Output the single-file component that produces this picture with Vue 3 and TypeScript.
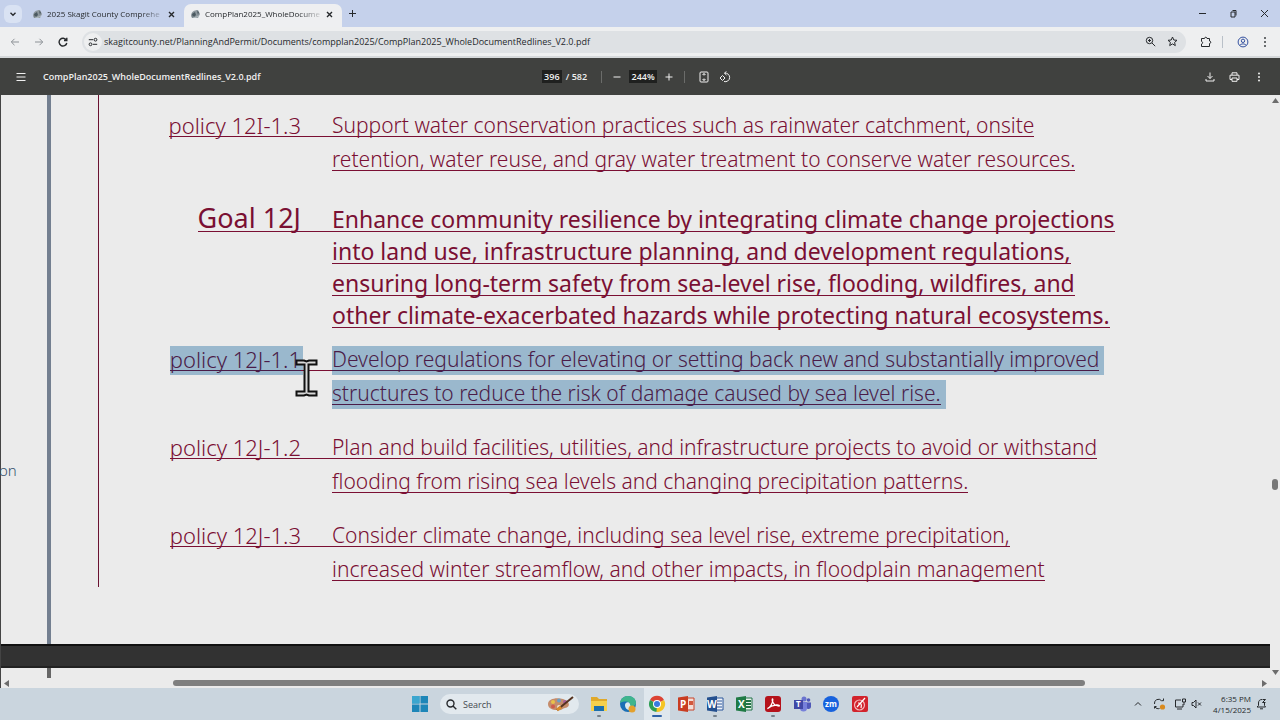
<script setup lang="ts">
import { ref } from 'vue'

interface Entry {
  kind: 'policy' | 'goal'
  label: string
  lines: string[]
  selected?: boolean
}

const tabs = [
  { title: '2025 Skagit County Comprehe', active: false },
  { title: 'CompPlan2025_WholeDocume', active: true }
]

const address = ref('skagitcounty.net/PlanningAndPermit/Documents/compplan2025/CompPlan2025_WholeDocumentRedlines_V2.0.pdf')
const page = ref('396')
const zoom = ref('244%')
const query = ref('')

const entries: Entry[] = [
  {
    kind: 'policy',
    label: 'policy 12I-1.3',
    lines: [
      'Support water conservation practices such as rainwater catchment, onsite',
      'retention, water reuse, and gray water treatment to conserve water resources.'
    ]
  },
  {
    kind: 'goal',
    label: 'Goal 12J',
    lines: [
      'Enhance community resilience by integrating climate change projections',
      'into land use, infrastructure planning, and development regulations,',
      'ensuring long-term safety from sea-level rise, flooding, wildfires, and',
      'other climate-exacerbated hazards while protecting natural ecosystems.'
    ]
  },
  {
    kind: 'policy',
    label: 'policy 12J-1.1',
    selected: true,
    lines: [
      'Develop regulations for elevating or setting back new and substantially improved',
      'structures to reduce the risk of damage caused by sea level rise.'
    ]
  },
  {
    kind: 'policy',
    label: 'policy 12J-1.2',
    lines: [
      'Plan and build facilities, utilities, and infrastructure projects to avoid or withstand',
      'flooding from rising sea levels and changing precipitation patterns.'
    ]
  },
  {
    kind: 'policy',
    label: 'policy 12J-1.3',
    lines: [
      'Consider climate change, including sea level rise, extreme precipitation,',
      'increased winter streamflow, and other impacts, in floodplain management'
    ]
  }
]
</script>

<template>
  <div class="screen">
    <header class="tabstrip">
      <button class="tab-search" aria-label="Search tabs">
        <svg width="8" height="8" viewBox="0 0 8 8"><path d="M1.5 2.8 4 5.2 6.5 2.8" class="ink bold" /></svg>
      </button>
      <div v-for="t in tabs" :key="t.title" class="tab" :class="{ active: t.active }">
        <svg width="11" height="11" viewBox="0 0 11 11">
          <path d="M1 7C1 3 4 1 8 1l2 4-2 4H2z" fill="#8d979d" />
          <path d="M2 5 5 3l1 3-3 3zM7 2l2 1-1 3z" fill="#4b5960" />
          <path d="M3 8c2 1 4 0 6-1" stroke="#b9c4c8" fill="none" />
        </svg>
        <a href="#" class="tab-title">{{ t.title }}</a>
        <button aria-label="Close tab">
          <svg width="7" height="7" viewBox="0 0 7 7"><path d="m1 1 5 5M6 1 1 6" class="ink bold" /></svg>
        </button>
      </div>
      <button class="new-tab" aria-label="New tab">
        <svg width="9" height="9" viewBox="0 0 9 9"><path d="M4.5 1v7M1 4.5h7" class="ink" /></svg>
      </button>
      <div class="window-buttons">
        <button aria-label="Minimize"><svg width="9" height="9" viewBox="0 0 9 9"><path d="M1 4.5h7" class="ink" /></svg></button>
        <button aria-label="Restore">
          <svg width="9" height="9" viewBox="0 0 9 9"><path d="M2 3h4v5H2zM3.500 1.500h3.500v5" class="ink" /></svg>
        </button>
        <button aria-label="Close"><svg width="9" height="9" viewBox="0 0 9 9"><path d="m1 1 7 7M8 1 1 8" class="ink" /></svg></button>
      </div>
    </header>

    <nav class="toolbar">
      <button class="dim" aria-label="Back"><svg width="10" height="10" viewBox="0 0 10 10"><path d="M9 5H1.500M4.500 1.800 1.300 5l3.200 3.200" class="ink" /></svg></button>
      <button class="dim" aria-label="Forward"><svg width="10" height="10" viewBox="0 0 10 10"><path d="M1 5h7.500M5.500 1.800 8.700 5 5.500 8.200" class="ink" /></svg></button>
      <button aria-label="Reload">
        <svg width="10" height="10" viewBox="0 0 10 10"><path d="M8.300 3A3.900 3.900 0 1 0 8.800 6M8.800.8v2.700H6" class="ink bold" /></svg>
      </button>
      <div class="omnibox">
        <button class="site-info" aria-label="Site information">
          <svg width="10" height="10" viewBox="0 0 10 10"><path d="M.8 2.700h4.400M4.800 7.300h4.400" class="ink" /><circle cx="7.500" cy="2.700" r="1.400" class="ink" /><circle cx="2.500" cy="7.300" r="1.400" class="ink" /></svg>
        </button>
        <input v-model="address" type="text" aria-label="Address" />
        <button aria-label="Zoom">
          <svg width="11" height="11" viewBox="0 0 11 11"><circle cx="4.500" cy="4.500" r="3.200" class="ink" /><path d="M7 7l3.200 3.200M4.500 3v3M3 4.500h3" class="ink" /></svg>
        </button>
        <button aria-label="Bookmark">
          <svg width="11" height="11" viewBox="0 0 11 11"><path d="m5.500 1 1.300 3 3.200.3-2.400 2.100.7 3.200-2.800-1.700-2.800 1.700.7-3.200L1 4.300 4.200 4z" class="ink" /></svg>
        </button>
      </div>
      <button class="extensions" aria-label="Extensions">
        <svg width="12" height="12" viewBox="0 0 12 12"><path d="M1.500 2.500H4.500C4.500.8 7 .8 7 2.500h2.500V5c1.700 0 1.700 2.500 0 2.500v3h-8V8c1.500-.3 1.500-2.300 0-2.600z" class="ink" /></svg>
      </button>
      <span class="divider"></span>
      <button class="profile" aria-label="Profile">
        <svg width="12" height="12" viewBox="0 0 12 12"><circle cx="6" cy="6" r="4.900" class="ink" /><circle cx="6" cy="4.800" r="1.700" class="ink" /><path d="M2.700 9.400c1.500-2 5-2 6.600 0" class="ink" /></svg>
      </button>
      <button aria-label="Menu">
        <svg width="4" height="12" viewBox="0 0 4 12" fill="#3c4043"><circle cx="2" cy="2" r="1" /><circle cx="2" cy="6" r="1" /><circle cx="2" cy="10" r="1" /></svg>
      </button>
    </nav>

    <section class="pdfbar">
      <div class="pdf-left">
        <button aria-label="Sidebar"><svg width="10" height="10" viewBox="0 0 10 10"><path d="M.5 1.500h9M.5 5h9M.5 8.500h9" class="ink" /></svg></button>
        <span class="pdf-name">CompPlan2025_WholeDocumentRedlines_V2.0.pdf</span>
      </div>
      <div class="pdf-center">
        <input v-model="page" class="page-field" type="text" aria-label="Page" />
        <span class="page-total">/ 582</span>
        <span class="divider"></span>
        <button aria-label="Zoom out"><svg width="8" height="8" viewBox="0 0 8 8"><path d="M.5 4h7" class="ink" /></svg></button>
        <input v-model="zoom" class="zoom-field" type="text" aria-label="Zoom level" />
        <button aria-label="Zoom in"><svg width="8" height="8" viewBox="0 0 8 8"><path d="M.5 4h7M4 .5v7" class="ink" /></svg></button>
        <span class="divider"></span>
        <button class="fit" aria-label="Fit to page">
          <svg width="10" height="12" viewBox="0 0 10 12"><rect x="1" y="1" width="8" height="10" rx="1" class="ink" /><path d="M5 2.500v2M5 7.500v2M3.500 4 5 2.500 6.500 4M3.500 8 5 9.500 6.500 8" class="ink" /></svg>
        </button>
        <button aria-label="Rotate">
          <svg width="12" height="12" viewBox="0 0 12 12"><path d="M5.500 2.200A4.300 4.300 0 1 1 5 10.500M7.500.3 5.500 2.200l2 1.900M3.500 4.500 6 7 3.500 9.500 1 7z" class="ink" /></svg>
        </button>
      </div>
      <div class="pdf-right">
        <button aria-label="Download"><svg width="10" height="10" viewBox="0 0 10 10"><path d="M5 .5v6M2.500 4 5 6.500 7.500 4M1 7v2h8V7" class="ink" /></svg></button>
        <button aria-label="Print">
          <svg width="11" height="10" viewBox="0 0 11 10"><path d="M3 3V.8h5V3M3 7.500H1V3.200h9v4.300H8M3 6h5v3.300H3z" class="ink" /></svg>
        </button>
        <button class="more" aria-label="More"><svg width="4" height="10" viewBox="0 0 4 10" fill="#eee"><circle cx="2" cy="1.500" r="1" /><circle cx="2" cy="5" r="1" /><circle cx="2" cy="8.500" r="1" /></svg></button>
      </div>
    </section>

    <main class="viewer">
      <div class="pages">
        <div class="sheet">
          <aside class="comments">on</aside>
          <article class="redline">
            <section v-for="e in entries" :key="e.label" :class="['entry', e.kind, { selected: e.selected }]">
              <h2 class="label"><span class="run">{{ e.label }}</span></h2>
              <span class="leader"></span>
              <p class="body">
                <span v-for="l in e.lines" :key="l" class="line"><span class="run">{{ l }}</span></span>
              </p>
            </section>
          </article>
        </div>
        <div class="page-gap"></div>
        <div class="next-sheet"><span class="rule"></span></div>
        <div class="hscroll">
          <svg width="5" height="7" viewBox="0 0 5 7"><path d="M5 0v7L0 3.500z" fill="#6c6c6c" /></svg>
          <div class="htrack"><div class="hthumb"></div></div>
          <svg width="5" height="7" viewBox="0 0 5 7"><path d="M0 0v7l5-3.500z" fill="#6c6c6c" /></svg>
        </div>
      </div>
      <div class="vscroll">
        <svg width="7" height="5" viewBox="0 0 7 5"><path d="M0 5h7L3.500 0z" fill="#6c6c6c" /></svg>
        <div class="vtrack"><div class="vthumb"></div></div>
        <svg width="7" height="5" viewBox="0 0 7 5"><path d="M0 0h7L3.500 5z" fill="#6c6c6c" /></svg>
      </div>
      <svg class="cursor" width="23" height="38" viewBox="0 0 23 38">
        <path d="M1.500 1.500H9l2.500 1 2.500-1h7.500v4h-8v27h8v4H14l-2.500-1-2.500 1H1.500v-4h8v-27h-8z" fill="#d8d8d8" stroke="#111" stroke-width="2" />
      </svg>
    </main>

    <footer class="taskbar">
      <div class="apps">
        <button aria-label="Start">
          <svg width="18" height="18" viewBox="0 0 18 18"><path d="M1 1h7.500v7.500H1zM9.500 1H17v7.500H9.500zM1 9.500h7.500V17H1zM9.500 9.500H17V17H9.500z" fill="#1d86b8" /><path d="M1 1h7.500v7.500H1z" fill="#3ba6cf" /></svg>
        </button>
        <label class="search">
          <svg width="11" height="11" viewBox="0 0 11 11"><circle cx="4.500" cy="4.500" r="3.500" class="ink bold" /><path d="m7 7 3.300 3.300" class="ink bold" /></svg>
          <input v-model="query" type="text" placeholder="Search" aria-label="Search" />
          <svg width="28" height="16" viewBox="0 0 28 16">
            <path d="M1 8c0-5 8-7 15-5 7 2 8 8 2 9-3 .5-3 3-8 2C5 14 1 12 1 8z" fill="#c58c6b" />
            <circle cx="6" cy="6" r="2" fill="#e9c24a" /><circle cx="12" cy="4.500" r="2" fill="#6a9fc4" /><circle cx="18" cy="6" r="2" fill="#a75f9b" /><circle cx="6" cy="10.500" r="2" fill="#cf5b4b" /><circle cx="12" cy="11" r="2" fill="#f0e2d2" />
            <path d="M10 14 26 1" stroke="#55321f" stroke-width="2" /><path d="m10 14 4-3" stroke="#d98b2b" stroke-width="3" />
          </svg>
        </label>
        <button class="running" aria-label="File Explorer">
          <svg width="18" height="18" viewBox="0 0 18 18"><path d="M1 2h6l2 2h8v12H1z" fill="#e0a92a" /><path d="M1 6h16v10H1z" fill="#f5d04d" /><path d="M4 11h10v5H4z" fill="#1c6fae" /></svg>
        </button>
        <button aria-label="Edge">
          <svg width="18" height="18" viewBox="0 0 18 18"><circle cx="9" cy="9" r="8" fill="#1b6fb5" /><path d="M1 8C2 3 5 1 9 1c5 0 8 3 8 7 0 3-4 4-6 3 1-4-4-6-10-3z" fill="#3fb58d" /><path d="M6 10c0-3 4-4 5-1 0 2 1 3 5 3-1 2-3 3-5 3-3 0-5-2-5-5z" fill="#dbe9ee" /><circle cx="13" cy="14" r="3.500" fill="#e3a02c" /></svg>
        </button>
        <button class="running current" aria-label="Chrome">
          <svg width="18" height="18" viewBox="0 0 18 18"><path d="M9 9 2 5a8 8 0 0 1 14 0z" fill="#dc4435" /><path d="M9 9 2 5a8 8 0 0 0 6.500 12L13 9z" fill="#2f9e54" /><path d="M9 9l7-4a8 8 0 0 1-7.500 12z" fill="#f5c526" /><circle cx="9" cy="9" r="4" fill="#fff" /><circle cx="9" cy="9" r="3" fill="#3a7be0" /></svg>
        </button>
        <button aria-label="PowerPoint">
          <svg width="18" height="18" viewBox="0 0 18 18"><path d="M9 3h8v12H9z" fill="#f3ddd7" stroke="#c8452b" /><path d="M12 6h4v4h-4z" fill="#d2573c" /><path d="M1 2.500 11 1v16L1 15.500z" fill="#c93d22" /><text x="3" y="13" class="glyph">P</text></svg>
        </button>
        <button class="running" aria-label="Word">
          <svg width="18" height="18" viewBox="0 0 18 18"><path d="M9 3h8v12H9z" fill="#eef2f9" stroke="#2b579a" /><path d="M11 6h5M11 9h5M11 12h5" stroke="#2b579a" /><path d="M1 2.500 11 1v16L1 15.500z" fill="#24508f" /><text x="1" y="13" class="glyph">W</text></svg>
        </button>
        <button aria-label="Excel">
          <svg width="18" height="18" viewBox="0 0 18 18"><path d="M9 3h8v12H9z" fill="#e9f3ec" stroke="#217346" /><path d="M11 6h5M11 9h5M11 12h5" stroke="#217346" stroke-width="2" /><path d="M1 2.500 11 1v16L1 15.500z" fill="#1f7a45" /><text x="3" y="13" class="glyph">X</text></svg>
        </button>
        <button class="running" aria-label="Acrobat">
          <svg width="18" height="18" viewBox="0 0 18 18"><rect x="1" y="1" width="16" height="16" rx="3" fill="#b5121b" /><path d="M3.500 13.500C6 13 9 8 8.800 4.500 8.500 3 7.500 5 9 7.500s4 3.500 6 3.500c1 0 0-1.500-3-1-3 .3-6 1.500-8.500 3.500z" fill="none" stroke="#fff" stroke-width="1.300" /></svg>
        </button>
        <button aria-label="Teams">
          <svg width="18" height="18" viewBox="0 0 18 18"><circle cx="11" cy="4" r="2.500" fill="#6a73cf" /><circle cx="15.500" cy="5" r="1.800" fill="#5059b8" /><path d="M7 7h7v6a3.500 3.500 0 0 1-7 0z" fill="#7680da" /><path d="M14 7.500h4V12a2.500 2.500 0 0 1-4 1.500z" fill="#5059b8" /><path d="M1 5h9v9H1z" fill="#4048a5" /><text x="3" y="12" class="glyph small">T</text></svg>
        </button>
        <button aria-label="Zoom app">
          <svg width="18" height="18" viewBox="0 0 18 18"><circle cx="9" cy="9" r="8" fill="#1762dd" /><text x="9" y="12" text-anchor="middle" class="glyph small">zm</text></svg>
        </button>
        <button aria-label="PDF editor">
          <svg width="18" height="18" viewBox="0 0 18 18"><rect x="1" y="1" width="16" height="16" rx="2" fill="#d2232c" /><circle cx="8.500" cy="10" r="5" fill="none" stroke="#f4b9bb" stroke-width="1.200" /><path d="m6 12 8-9M7 8c3 0 4 1 3 5" stroke="#fff" stroke-width="1.200" fill="none" /></svg>
        </button>
      </div>
      <div class="tray">
        <button aria-label="Hidden icons"><svg width="8" height="8" viewBox="0 0 8 8"><path d="M1 5.500 4 2.500l3 3" class="ink" /></svg></button>
        <button aria-label="Updates">
          <svg width="13" height="12" viewBox="0 0 13 12"><path d="M1.500 6a4 4 0 0 1 7-3.300h2M10.500.5v2.200M1.500 10.500V8.500h2M2 9c1 1.500 3 2 4.500 1.500" class="ink" /><circle cx="9.500" cy="9" r="2.600" fill="#d98a1e" /></svg>
        </button>
        <button class="network" aria-label="Network and volume">
          <svg width="28" height="12" viewBox="0 0 28 12"><path d="M7 2H1.500v7H9V6M3 11h5M8.500 1h3v3h-3zM10 4v3" class="ink" /><path d="M18 4.500h1.500L22 2v8l-2.500-2.500H18zM24 4.500l3 3M27 4.500l-3 3" class="ink" /></svg>
        </button>
        <time class="clock"><span>6:35 PM</span><span>4/15/2025</span></time>
        <button aria-label="Notifications">
          <svg width="11" height="12" viewBox="0 0 11 12"><path d="M1 9h8.500L8.500 7.500V5M6 1.500C3.500 1.500 2.500 3 2.500 5v2.500L1 9M4 10.800h3M6.500 1.500h3l-3 3h3" class="ink" /></svg>
        </button>
      </div>
    </footer>
  </div>
</template>

<style>
html, body { margin: 0; background: #ebebeb; }
</style>

<style scoped>
.screen {
  --paper: #ebebeb;
  --redline: #7a0f33;
  --mark: #9ab8cd;
  display: flex;
  flex-direction: column;
  min-height: 100vh;
  font-family: "Open Sans", "Noto Sans", sans-serif;
  font-size: 9px;
  color: #26292c;
}
.screen *, .screen { box-sizing: border-box; }
button { display: flex; align-items: center; justify-content: center; padding: 0; border: 0; background: none; color: inherit; }
input { min-width: 0; padding: 0; border: 0; outline: 0; background: none; color: inherit; font: inherit; }
svg { display: block; flex: none; }
.ink { fill: none; stroke: currentColor; stroke-width: 1; }
.bold { stroke-width: 1.4; }
.divider { width: 1px; height: 12px; background: #b9c0c8; }

.tabstrip { display: flex; align-items: flex-end; height: 27px; padding-left: 4px; background: #c5d1eb; }
.tab-search { width: 18px; height: 18px; margin: 0 4px 4px 0; border-radius: 6px; background: #d9e2f3; }
.tab { display: flex; align-items: center; gap: 4px; width: 158px; height: 23px; padding: 0 9px 3px 6px; border-radius: 7px 7px 0 0; }
.tab.active { background: #eeeff1; }
.tab-title { flex: 1; color: inherit; font-size: 8px; line-height: 14px; text-decoration: none; white-space: nowrap; mask-image: linear-gradient(90deg, #000 80%, transparent 102%); }
.new-tab { width: 20px; height: 27px; }
.window-buttons { display: flex; gap: 22px; height: 27px; margin-left: auto; padding-right: 11px; }

.toolbar { display: flex; align-items: center; gap: 14px; height: 31px; padding: 0 13px 0 10px; border-bottom: 2px solid #d5d8da; background: #eeeff0; }
.dim { color: #8c9196; }
.omnibox { display: flex; flex: 1; align-items: center; gap: 11px; height: 22px; padding: 0 8px 0 2px; border-radius: 11px; background: #dee1e4; }
.omnibox input { flex: 1; }
.site-info { width: 18px; height: 18px; margin-right: -9px; border-radius: 9px; background: #eeeff0; }
.extensions { margin-right: -4px; }
.profile { color: #3350a0; }

.pdfbar { display: grid; grid-template-columns: 1fr auto 1fr; align-items: center; height: 37px; background: #40413f; color: #f0f0f0; }
.pdf-left { display: flex; align-items: center; gap: 17px; padding-left: 16px; }
.pdf-name { font-weight: 600; }
.pdf-center { display: flex; align-items: center; gap: 11px; padding-right: 7px; font-weight: 600; }
.pdf-center input { height: 13px; background: #1f201f; text-align: center; }
.pdf-center .divider { background: #6b6c6a; }
.page-field { width: 20px; }
.page-total { margin: 0 3px 0 -7px; }
.zoom-field { width: 28px; margin: 0 -3px; }
.fit { margin: 0 -1px 0 3px; }
.pdf-right { display: flex; align-items: center; justify-content: flex-end; gap: 14px; padding-right: 19px; }
.more { margin-left: 3px; }

.viewer { position: relative; display: flex; flex: 1; background: var(--paper); }
.pages { display: flex; flex: 1; flex-direction: column; min-width: 0; border-left: 1px solid #444; }
.sheet { display: flex; flex: 1; padding-bottom: 57px; background: linear-gradient(90deg, transparent 46px, #737f90 46px, #737f90 50px, transparent 50px); }
.comments { display: flex; align-items: center; width: 97px; padding-top: 258px; color: #35506b; font-family: "Noto Sans", sans-serif; font-size: 15px; font-weight: 300; text-indent: -2px; }
.redline { flex: 1; padding: 8px 0 6px; border-left: 1px solid #6a1231; color: var(--redline); font-family: "Noto Sans", sans-serif; }
.entry { display: grid; grid-template-columns: 202px 31px 1fr; margin-top: 20px; }
.entry:first-child { margin-top: 0; }
.goal { margin-top: 29px; }
.goal + .policy { margin-top: 9px; }
.label, .body { margin: 0; font-size: 21px; font-weight: 300; line-height: 21px; white-space: nowrap; }
.label, .line { display: flex; align-items: flex-end; height: 34px; }
.label { justify-content: flex-end; font-size: 22px; }
.run { padding-top: 3px; border-bottom: 1px solid var(--redline); }
.leader { height: 34px; border-bottom: 1px solid var(--redline); }
.goal .body { font-size: 23px; font-weight: 400; line-height: 23px; }
.goal .label { font-size: 27px; font-weight: 400; line-height: 26px; }
.goal .label, .goal .line, .goal .leader { height: 32px; }
.selected .run { background: var(--mark); color: #4a1c48; border-color: #4a1c48; box-shadow: 0 4px var(--mark), 2px 0 var(--mark), 2px 4px var(--mark); }
.selected .line .run { box-shadow: 0 4px var(--mark), 5px 0 var(--mark), 5px 4px var(--mark); }

.page-gap { height: 24px; border-top: 2px solid #111; border-bottom: 2px solid #222; background: #323232; }
.next-sheet { display: flex; height: 10px; padding-left: 46px; }
.rule { width: 4px; background: #666; }
.hscroll { display: flex; align-items: center; gap: 2px; height: 10px; padding: 0 3px; }
.htrack { flex: 1; }
.hthumb { width: 73%; height: 6px; margin-left: 13%; border-radius: 3px; background: #7f7f7f; }
.vscroll { display: flex; flex-direction: column; align-items: center; width: 10px; padding: 3px 0 13px; }
.vtrack { flex: 1; padding-top: 376px; }
.vthumb { width: 6px; height: 11px; border-radius: 3px; background: #777; }
.cursor { position: absolute; left: 295px; top: 264px; }

.taskbar { display: grid; grid-template-columns: 1fr auto 1fr; align-items: center; height: 32px; background: #cad5de; }
.apps { display: flex; grid-column: 2; align-items: center; gap: 11px; }
.apps > button { position: relative; height: 32px; }
.running::after { content: ""; position: absolute; bottom: 3px; width: 4px; height: 2px; border-radius: 1px; background: #76818b; }
.current { background: #dfe7ed; box-shadow: -4px 0 #dfe7ed, 4px 0 #dfe7ed; }
.current::after { width: 10px; background: #2f62a8; }
.search { display: flex; align-items: center; gap: 6px; width: 139px; height: 20px; padding: 0 4px 0 6px; border-radius: 10px; background: #e2e9ee; }
.search input { flex: 1; font-size: 9px; }
.search input::placeholder { color: #454a50; opacity: 1; }
.glyph { fill: #fff; font-family: "Open Sans", sans-serif; font-size: 10px; font-weight: 700; }
.small { font-size: 8px; }
.tray { display: flex; align-items: center; justify-content: flex-end; gap: 11px; padding-right: 13px; }
.network { margin-left: -3px; }
.clock { display: flex; flex-direction: column; align-items: flex-end; margin-right: -6px; font-size: 8px; line-height: 11px; }
</style>
